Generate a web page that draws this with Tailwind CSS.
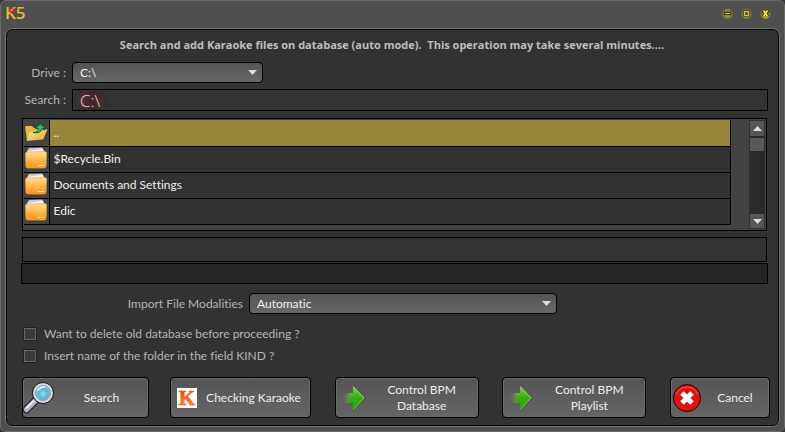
<!DOCTYPE html>
<html lang="en">
<head>
  <meta charset="UTF-8" />
  <meta name="viewport" content="width=device-width, initial-scale=1.0"/>
  <title>Search Karaoke files</title>
  <script src="https://cdn.jsdelivr.net/npm/@tailwindcss/browser@4"></script>
</head>
<body class="bg-[#3a3a3a] font-['Lato','Open_Sans',sans-serif] text-[12px] leading-4 text-[#b4b4b4] [font-variant-ligatures:none]">

  <!-- Shared icon shapes -->
  <svg class="absolute h-0 w-0" aria-hidden="true">
    <defs>
      <linearGradient id="gold" x1="0" y1="0" x2="0" y2="1"><stop offset="0" stop-color="#e8a020"/><stop offset="1" stop-color="#f2de3c"/></linearGradient>
      <linearGradient id="folderFill" x1="0" y1="0" x2="0" y2="1"><stop offset="0" stop-color="#ffdc98"/><stop offset="0.5" stop-color="#ffb850"/><stop offset="1" stop-color="#fb9410"/></linearGradient>
      <linearGradient id="openFill" x1="0" y1="0" x2="1" y2="1"><stop offset="0" stop-color="#ffeb9a"/><stop offset="1" stop-color="#e3a92c"/></linearGradient>
      <linearGradient id="arrowFill" x1="0" y1="0" x2="0" y2="1"><stop offset="0" stop-color="#7fcf4c"/><stop offset="0.5" stop-color="#35ad12"/><stop offset="1" stop-color="#2a9a10"/></linearGradient>
      <linearGradient id="tailFill" x1="0" y1="0" x2="1" y2="0"><stop offset="0" stop-color="#6fae50" stop-opacity="0"/><stop offset="1" stop-color="#5abc30"/></linearGradient>
      <linearGradient id="fire" x1="0" y1="0" x2="0" y2="1"><stop offset="0.2" stop-color="#e03c18"/><stop offset="0.7" stop-color="#f78a1c"/><stop offset="1" stop-color="#e8501c"/></linearGradient>
      <radialGradient id="lens" cx="0.5" cy="0.55" r="0.6"><stop offset="0" stop-color="#8fdcf0"/><stop offset="0.6" stop-color="#52b4d2"/><stop offset="1" stop-color="#c8eef8"/></radialGradient>
      <radialGradient id="ball" cx="0.5" cy="0.7" r="0.8"><stop offset="0" stop-color="#9a9038"/><stop offset="1" stop-color="#605a20"/></radialGradient>
      <radialGradient id="ballBright" cx="0.5" cy="0.8" r="0.7"><stop offset="0" stop-color="#c9b92c"/><stop offset="1" stop-color="#5a5208"/></radialGradient>
    </defs>
    <symbol id="folder" viewBox="0 0 24 24">
      <path d="M3 4 L5 1 L18 0.500 L20 4 V8 H3Z" fill="#c9c9d2"/>
      <path d="M4 4 L19 1.500 L20 6 H4Z" fill="#f6f6fa"/>
      <path d="M1.500 6.500 Q1.500 5 3.500 5 L20.500 4.500 Q22.500 4.500 22.500 6 L22 19 Q22 21 20 21 H4 Q2 21 2 19Z" fill="url(#folderFill)" stroke="#f7b045" stroke-width="0.7"/>
      <path d="M14 18.500 h6" stroke="#ffe7b4" stroke-width="1"/>
    </symbol>
    <symbol id="arrow" viewBox="0 0 24 26">
      <path d="M1 8 H12 V18 H1Z" fill="url(#tailFill)"/>
      <path d="M11 1 L22.500 13 L11 25.500 V18 H7 V8 H11Z" fill="url(#arrowFill)"/>
      <path d="M11.500 2 L22 13 L11.500 24.500" fill="none" stroke="#8fe066" stroke-width="0.9"/>
      <path d="M11.500 25.500 L23 13" stroke="#1d6d08" stroke-width="0.8"/>
    </symbol>
    <symbol id="drop" viewBox="0 0 9 5"><path d="M0 0 H9 L4.500 5Z" fill="#dedede"/></symbol>
  </svg>

  <div class="flex min-h-screen flex-col rounded-md border-x border-y border-[#6b6b6b] bg-[#505050] px-[5px] pb-[5px]">

    <!-- Title bar -->
    <header class="flex h-7 shrink-0 items-center justify-between pr-2 pb-1">
      <svg class="h-6 w-6" viewBox="0 0 24 24" role="img" aria-label="K5">
        <text x="-1" y="18" font-family="Noto Sans" font-weight="500" font-size="17" fill="url(#gold)">K5</text>
        <circle cx="6" cy="10" r="2.500" fill="#d12a1c"/>
        <circle cx="5.500" cy="9" r="0.900" fill="#ffb09c"/>
      </svg>
      <div class="flex gap-2">
        <button aria-label="Minimize" class="h-[11px] w-[11px]">
          <svg class="h-[11px] w-[11px]" viewBox="0 0 11 11"><circle cx="5.500" cy="5.500" r="5.300" fill="url(#ball)"/><path d="M3 2 H8" stroke="#b0aa68" stroke-width="0.700"/><path d="M2 4 H9 V7 H2Z" fill="#3a360e"/><path d="M3 5 H8 V6 H3Z" fill="#d8d07c"/></svg>
        </button>
        <button aria-label="Maximize" class="h-[11px] w-[11px]">
          <svg class="h-[11px] w-[11px]" viewBox="0 0 11 11"><circle cx="5.500" cy="5.500" r="5.300" fill="url(#ball)"/><rect x="2.500" y="2.500" width="6" height="6" fill="#3a360e"/><rect x="3.500" y="3.500" width="4" height="4" fill="#6a6426" stroke="#c8c070" stroke-width="1"/></svg>
        </button>
        <button aria-label="Close" class="h-[11px] w-[11px]">
          <svg class="h-[11px] w-[11px]" viewBox="0 0 11 11"><circle cx="5.500" cy="5.500" r="5.300" fill="url(#ballBright)"/><path d="M3 2.500 L8 8.500 M8 2.500 L3 8.500" stroke="#3c3604" stroke-width="3"/><path d="M3.500 2.500 L7.500 8.500 M7.500 2.500 L3.500 8.500" stroke="#fff06a" stroke-width="1.500"/></svg>
        </button>
      </div>
    </header>

    <main class="flex flex-1 flex-col rounded-md border border-black bg-[#323232] pt-[7px] pr-[10px] pb-[7px] pl-[15px] outline outline-[#707070]">
      <h1 class="pr-1.5 text-center font-['Open_Sans'] text-[11px] font-bold whitespace-pre text-[#bebebe]">Search and add Karaoke files on database (auto mode).  This operation may take several minutes....</h1>

      <!-- Drive and path -->
      <div class="mt-[9px] flex items-center">
        <label for="drive" class="w-[50px] pr-1.5 text-right whitespace-nowrap">Drive :</label>
        <div class="relative w-[191px]">
          <select id="drive" class="block h-[21px] w-full appearance-none rounded border border-black bg-linear-to-b from-[#545454] to-[#686868] px-[7px] text-[#f0f0f0]">
            <option>C:\</option>
          </select>
          <svg class="pointer-events-none absolute top-2 right-1.5 h-[5px] w-[9px]"><use href="#drop"/></svg>
        </div>
      </div>
      <div class="mt-1.5 flex items-center">
        <label for="path" class="w-[50px] pr-1.5 text-right whitespace-nowrap">Search :</label>
        <input id="path" type="text" value="C:\" class="h-[22px] min-w-0 flex-1 border border-black bg-[#333333] px-[7px] font-['Open_Sans'] text-[17px] font-light text-[#e0d4d4] [text-shadow:0_0_4px_#802838,0_0_6px_#802838,0_0_8px_#802838,0_0_8px_#802838,0_0_10px_#802838]" />
      </div>

      <!-- Folder list -->
      <div class="mt-[7px] mr-px flex h-[113px] border border-black bg-[#434343] p-px">
        <div class="min-w-0 flex-1">
          <table class="w-full border-collapse text-[#f0f0f0]">
            <tbody>
              <tr class="h-[26px] border-b border-black">
                <td class="w-[25px] border-r border-black p-0">
                  <svg class="h-6 w-6" viewBox="0 0 24 24">
                    <path d="M1 6 L2 5 H8 L10 7 L19 8 L17 18 L3 19 Z" fill="#e9b840"/>
                    <path d="M3 19.500 L6 11 L13 12 L23 8.500 L19 18 Z" fill="url(#openFill)" stroke="#f8d878" stroke-width="0.6"/>
                    <path d="M9 11.500 Q14 12 14.500 7.500 H11.500 L16 3 L21 7 L18 7.500 Q17 13 9 11.500Z" fill="#36b85c" stroke="#0d5c26" stroke-width="0.9"/>
                  </svg>
                </td>
                <td class="border-r border-black bg-[#998537] px-1 py-0">..</td>
              </tr>
              <tr class="h-[26px] border-b border-black">
                <td class="border-r border-black p-0"><svg class="h-6 w-6"><use href="#folder"/></svg></td>
                <td class="border-r border-black bg-[#323232] px-1 py-0">$Recycle.Bin</td>
              </tr>
              <tr class="h-[26px] border-b border-black">
                <td class="border-r border-black p-0"><svg class="h-6 w-6"><use href="#folder"/></svg></td>
                <td class="border-r border-black bg-[#323232] px-1 py-0">Documents and Settings</td>
              </tr>
              <tr class="h-[26px] border-b border-black">
                <td class="border-r border-black p-0"><svg class="h-6 w-6"><use href="#folder"/></svg></td>
                <td class="border-r border-black bg-[#323232] px-1 py-0">Edic</td>
              </tr>
            </tbody>
          </table>
        </div>
        <div class="ml-[18px] flex w-4 flex-col border border-[#303030] bg-[#2a2a2a]">
          <button aria-label="Scroll up" class="grid h-[15px] shrink-0 place-items-center bg-[#565656]">
            <svg class="h-[5px] w-[9px] rotate-180"><use href="#drop"/></svg>
          </button>
          <div class="mt-0.5 h-[13px] bg-[#5a5a5a]"></div>
          <button aria-label="Scroll down" class="mt-auto grid h-[14px] shrink-0 place-items-center bg-[#565656]">
            <svg class="h-[5px] w-[9px]"><use href="#drop"/></svg>
          </button>
        </div>
      </div>

      <!-- Status and progress -->
      <div class="mt-1.5 mr-px h-[25px] border border-black bg-[#333333]"></div>
      <div class="mt-px -ml-px h-[21px] border border-black bg-[#252525]"></div>

      <!-- Options -->
      <div class="mt-[9px] flex items-center">
        <label for="mode" class="w-[227px] pr-1.5 text-right whitespace-nowrap">Import File Modalities</label>
        <div class="relative w-[308px]">
          <select id="mode" class="block h-[21px] w-full appearance-none rounded border border-black bg-linear-to-b from-[#545454] to-[#686868] px-[7px] text-[#f0f0f0]">
            <option>Automatic</option>
          </select>
          <svg class="pointer-events-none absolute top-2 right-1.5 h-[5px] w-[9px]"><use href="#drop"/></svg>
        </div>
      </div>
      <label class="mt-3 flex items-center gap-2 pl-0.5">
        <input type="checkbox" class="h-3 w-3 appearance-none border border-[#646464] bg-[#3a3a3a] outline outline-[#222222]" />
        Want to delete old database before proceeding ?
      </label>
      <label class="mt-1.5 flex items-center gap-2 pl-0.5">
        <input type="checkbox" class="h-3 w-3 appearance-none border border-[#646464] bg-[#3a3a3a] outline outline-[#222222]" />
        Insert name of the folder in the field KIND ?
      </label>

      <!-- Actions -->
      <div class="mt-auto -mr-0.5 flex justify-between text-[#ececec]">
        <div class="flex gap-[21px]">
          <button class="flex h-[41px] w-[127px] items-center rounded border border-black bg-linear-to-b from-[#545454] to-[#666666] inset-ring inset-ring-[#6a6a6a]">
            <svg class="h-8 w-8 shrink-0" viewBox="0 0 32 32">
              <path d="M12 19 L3.500 27.500" stroke="#111" stroke-width="7.500" stroke-linecap="round"/>
              <path d="M12 19 L3.500 27.500" stroke="#aab2c2" stroke-width="5.500" stroke-linecap="round"/>
              <path d="M11 18.500 L3 26.500" stroke="#eef1f6" stroke-width="2"/>
              <circle cx="20" cy="11" r="10.500" fill="#d4d9e4" stroke="#111" stroke-width="1"/>
              <circle cx="20" cy="11" r="7.500" fill="url(#lens)" stroke="#8b98ac" stroke-width="1"/>
              <path d="M14.500 9 Q17 4.500 22 5" stroke="#e6fafe" stroke-width="1.500" fill="none"/>
            </svg>
            <span class="flex-1">Search</span>
          </button>
          <button class="flex h-[41px] w-[141px] items-center rounded border border-black bg-linear-to-b from-[#545454] to-[#666666] pl-1.5 inset-ring inset-ring-[#6a6a6a]">
            <svg class="h-5 w-5 shrink-0 overflow-visible" viewBox="0 0 20 20" aria-hidden="true">
              <rect width="20" height="20" fill="#fff"/>
              <text x="10" y="17" text-anchor="middle" font-family="Liberation Serif" font-weight="700" font-size="21" fill="url(#fire)" stroke="#ee6a1c" stroke-width="0.700">K</text>
            </svg>
            <span class="flex-1 whitespace-nowrap">Checking Karaoke</span>
          </button>
        </div>
        <button class="flex h-[41px] w-[144px] items-center rounded border border-black bg-linear-to-b from-[#545454] to-[#666666] pl-1.5 inset-ring inset-ring-[#6a6a6a]">
          <svg class="h-[26px] w-6 shrink-0"><use href="#arrow"/></svg>
          <span class="flex-1">Control BPM<br>Database</span>
        </button>
        <button class="flex h-[41px] w-[144px] items-center rounded border border-black bg-linear-to-b from-[#545454] to-[#666666] pl-1.5 inset-ring inset-ring-[#6a6a6a]">
          <svg class="h-[26px] w-6 shrink-0"><use href="#arrow"/></svg>
          <span class="flex-1">Control BPM<br>Playlist</span>
        </button>
        <button class="flex h-[41px] w-[100px] items-center rounded border border-black bg-linear-to-b from-[#545454] to-[#666666] pl-0.5 inset-ring inset-ring-[#6a6a6a]">
          <svg class="h-7 w-7 shrink-0" viewBox="0 0 28 28">
            <circle cx="14" cy="14" r="13.500" fill="#e01212" stroke="#1a0505" stroke-width="1"/>
            <path d="M3 11 Q6 3 14 3 T25 11" stroke="#f05a50" stroke-width="1" fill="none"/>
            <path d="M9 9 L19 19 M19 9 L9 19" stroke="#fff" stroke-width="5"/>
          </svg>
          <span class="flex-1">Cancel</span>
        </button>
      </div>
    </main>
  </div>
</body>
</html>
